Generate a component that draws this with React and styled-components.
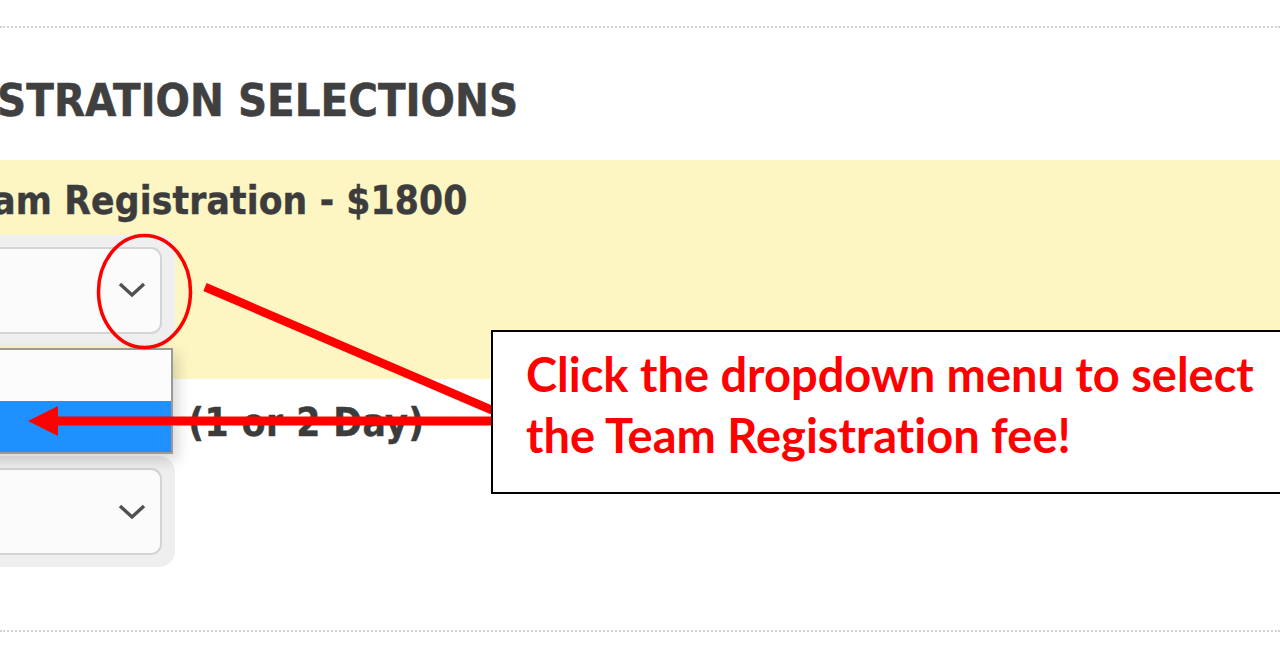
import styled, { createGlobalStyle } from "styled-components";

const GlobalStyle = createGlobalStyle`
  html, body {
    margin: 0;
    padding: 0;
    background: #ffffff;
    overflow: hidden;
  }
`;

const Page = styled.div`
  position: relative;
  width: 1280px;
  height: 660px;
  overflow: hidden;
  background: #ffffff;
  padding-top: 26px;
  box-sizing: border-box;
`;

const Rule = styled.div`
  height: 0;
  border-top: 2px dotted #d2d2d2;
  margin-top: ${(props) => props.gap || 0}px;
`;

const Content = styled.div`
  margin-left: -130px;
`;

const Heading = styled.h2`
  margin: 50px 0 37px 20px;
  font-family: "DejaVu Sans Condensed", "DejaVu Sans", sans-serif;
  font-stretch: semi-condensed;
  font-weight: bold;
  font-size: 45px;
  line-height: 1;
  color: #404040;
  -webkit-text-stroke: 0.5px #404040;
  white-space: nowrap;
`;

const Row = styled.div`
  background: ${(props) => (props.highlight ? "#fdf6c2" : "#ffffff")};
  padding: ${(props) => props.pad};
`;

const Label = styled.div`
  margin-left: ${(props) => props.indent}px;
  font-family: "DejaVu Sans Condensed", "DejaVu Sans", sans-serif;
  font-stretch: semi-condensed;
  font-weight: bold;
  font-size: 38.5px;
  letter-spacing: ${(props) => props.spacing}px;
  line-height: 1;
  color: #3c3c3c;
  -webkit-text-stroke: 0.4px #3c3c3c;
  white-space: nowrap;
`;

const LabelLead = styled.span`
  margin-right: 12px;
`;

const Ring = styled.div`
  position: relative;
  width: 305px;
  margin-top: ${(props) => props.gap}px;
  padding: 12px 13px 12px 0;
  box-sizing: border-box;
  background: #efefef;
  border-radius: 0 16px 16px 0;
`;

const SelectBox = styled.div`
  display: flex;
  align-items: center;
  justify-content: flex-end;
  height: 87px;
  padding-right: 14px;
  box-sizing: border-box;
  background: #fbfbfb;
  border: 2px solid #d4d4d4;
  border-left: none;
  border-radius: 0 11px 11px 0;
`;

const Menu = styled.div`
  position: absolute;
  top: calc(100% + 2px);
  left: 0;
  right: 2px;
  z-index: 2;
  border: 2px solid #9a9a9a;
  border-left: none;
  background: #fcfcfc;
  box-shadow: 4px 6px 14px rgba(0, 0, 0, 0.18);
`;

const Option = styled.div`
  height: ${(props) => props.h}px;
  background: ${(props) => (props.selected ? "#1e90ff" : "#fcfcfc")};
`;

const Overlay = styled.svg`
  position: absolute;
  left: 0;
  top: 0;
  z-index: 3;
  pointer-events: none;
`;

const Callout = styled.div`
  position: absolute;
  left: 491px;
  top: 330px;
  width: 820px;
  height: 164px;
  z-index: 4;
  box-sizing: border-box;
  padding: 12px 0 0 33px;
  background: #ffffff;
  border: 2px solid #000000;
  font-family: Lato, "Open Sans", sans-serif;
  font-weight: bold;
  font-size: 47px;
  font-variant-ligatures: none;
  line-height: 61px;
  color: #ff0000;
  white-space: nowrap;
`;

const Chevron = () => (
  <svg width="28" height="16" viewBox="0 0 28 16">
    <polyline
      points="2,2 14,13 26,2"
      fill="none"
      stroke="#505050"
      strokeWidth="3.4"
    />
  </svg>
);

function App() {
  return (
    <Page>
      <GlobalStyle />
      <Rule />
      <Content>
        <Heading>REGISTRATION SELECTIONS</Heading>
        <Row highlight pad="22px 0 33px 0">
          <Label indent={80} spacing={0.15}>
            Team Registration - $1800
          </Label>
          <Ring gap={14}>
            <SelectBox>
              <Chevron />
            </SelectBox>
            <Menu>
              <Option h={51} />
              <Option h={51} selected />
            </Menu>
          </Ring>
        </Row>
        <Row pad="25px 0 0 0">
          <Label indent={92} spacing={0.5}>
            <LabelLead>Field Pass</LabelLead> (1 or 2 Day)
          </Label>
          <Ring gap={14}>
            <SelectBox>
              <Chevron />
            </SelectBox>
          </Ring>
        </Row>
      </Content>
      <Rule gap={63} />

      <Overlay width="1280" height="660" viewBox="0 0 1280 660">
        <ellipse
          cx="144.5"
          cy="291.5"
          rx="46"
          ry="56"
          fill="none"
          stroke="#ff0000"
          strokeWidth="3.5"
        />
        <line x1="205" y1="287" x2="494" y2="411" stroke="#ff0000" strokeWidth="8.5" />
        <line x1="52" y1="421" x2="494" y2="421" stroke="#ff0000" strokeWidth="9" />
        <polygon points="28,421 58,406 58,436" fill="#ff0000" />
      </Overlay>

      <Callout>
        Click the dropdown menu to select
        <br />
        the Team Registration fee!
      </Callout>
    </Page>
  );
}

export default App;
